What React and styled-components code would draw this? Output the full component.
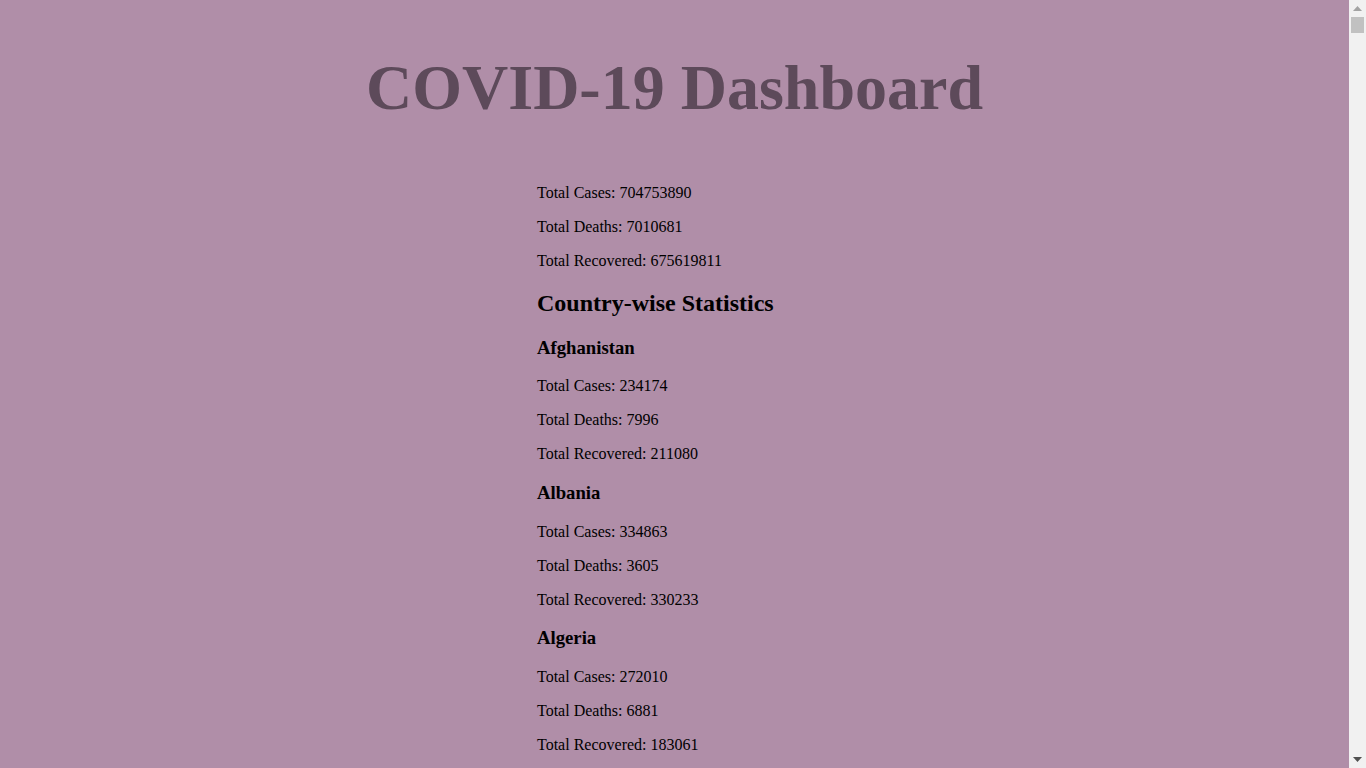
import React from "react";
import styled, { createGlobalStyle } from "styled-components";

const GlobalStyle = createGlobalStyle`
  html, body {
    background: #b08ea8;
  }
  body {
    margin: 8px;
    font-family: "Liberation Serif", "Times New Roman", serif;
    color: #000;
  }
`;

const Page = styled.div`
  display: flex;
  flex-direction: column;
  align-items: center;
  padding-right: 17px;
`;

const Title = styled.h1`
  font-size: 4em;
  color: #5d4a5a;
  margin: 0.67em 0;
`;

const Stats = styled.div`
  width: 275px;
`;

const Line = styled.p`
  margin: 16px 0;
`;

const Heading = styled.h2`
  font-size: 1.5em;
  margin: 0.83em 0;
`;

const Country = styled.h3`
  font-size: 1.17em;
  margin: 1em 0;
`;

// stand-in for the browser's vertical scrollbar
const ScrollBar = styled.div`
  position: fixed;
  top: 0;
  right: 0;
  bottom: 0;
  width: 17px;
  background: #f1f1f1;
  display: flex;
  flex-direction: column;
`;

const Arrow = styled.div`
  height: 17px;
  display: flex;
  align-items: center;
  justify-content: center;
  flex: none;
`;

const Track = styled.div`
  flex: 1;
`;

const Thumb = styled.div`
  margin: 0 2px;
  height: 16px;
  background: #c1c1c1;
`;

const global = { cases: 704753890, deaths: 7010681, recovered: 675619811 };

const countries = [
  { country: "Afghanistan", cases: 234174, deaths: 7996, recovered: 211080 },
  { country: "Albania", cases: 334863, deaths: 3605, recovered: 330233 },
  { country: "Algeria", cases: 272010, deaths: 6881, recovered: 183061 },
  { country: "Andorra", cases: 48015, deaths: 165, recovered: 0 },
  { country: "Angola", cases: 107327, deaths: 1937, recovered: 103419 },
  { country: "Anguilla", cases: 3904, deaths: 12, recovered: 3879 },
  { country: "Antigua and Barbuda", cases: 9106, deaths: 146, recovered: 8944 },
  { country: "Argentina", cases: 10101218, deaths: 130663, recovered: 9949511 },
  { country: "Armenia", cases: 451831, deaths: 8777, recovered: 441926 },
  { country: "Aruba", cases: 44224, deaths: 292, recovered: 42712 }
];

function App() {
  return (
    <Page>
      <GlobalStyle />
      <Title>COVID-19 Dashboard</Title>
      <Stats>
        <Line>Total Cases: {global.cases}</Line>
        <Line>Total Deaths: {global.deaths}</Line>
        <Line>Total Recovered: {global.recovered}</Line>
        <Heading>Country-wise Statistics</Heading>
        {countries.map(c => (
          <div key={c.country}>
            <Country>{c.country}</Country>
            <Line>Total Cases: {c.cases}</Line>
            <Line>Total Deaths: {c.deaths}</Line>
            <Line>Total Recovered: {c.recovered}</Line>
          </div>
        ))}
      </Stats>
      <ScrollBar>
        <Arrow>
          <svg width="9" height="5" viewBox="0 0 9 5">
            <path d="M0 5 L4.5 0 L9 5 Z" fill="#a3a3a3" />
          </svg>
        </Arrow>
        <Track>
          <Thumb />
        </Track>
        <Arrow>
          <svg width="9" height="5" viewBox="0 0 9 5">
            <path d="M0 0 L4.5 5 L9 0 Z" fill="#505050" />
          </svg>
        </Arrow>
      </ScrollBar>
    </Page>
  );
}

export default App;
